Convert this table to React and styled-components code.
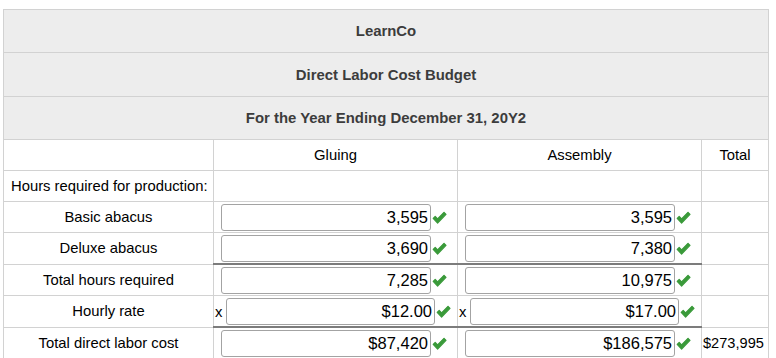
import React from "react";
import styled, { createGlobalStyle } from "styled-components";

const Global = createGlobalStyle`
  html, body { margin: 0; padding: 0; background: #fff; }
  body { font-family: "Liberation Sans", Arial, sans-serif; }
`;

const Page = styled.div`
  padding: 9px 0 0 3px;
`;

const Table = styled.table`
  border-collapse: collapse;
  table-layout: fixed;
  width: 765px;
`;

const HeadCell = styled.td`
  background: #ededed;
  border: 1px solid #d2d2d2;
  height: ${(p) => p.$h || 42}px;
  padding: 0;
  text-align: center;
  vertical-align: middle;
  font-weight: bold;
  font-size: 14.9px;
  color: #3c3c3c;
`;

const ColHead = styled.td`
  border: 1px solid #d2d2d2;
  height: 30px;
  padding: 0;
  text-align: center;
  vertical-align: middle;
  font-size: 14.8px;
  color: #000;
`;

const Label = styled.td`
  border: 1px solid #d2d2d2;
  height: 30px;
  padding: ${(p) => (p.$left ? "0 0 0 7px" : "0")};
  text-align: ${(p) => (p.$left ? "left" : "center")};
  vertical-align: middle;
  font-size: 14.8px;
  color: #000;
  white-space: nowrap;
`;

const ValueCell = styled.td`
  border: 1px solid #d2d2d2;
  border-top: ${(p) => (p.$thick ? "2px solid #7c7c7c" : "1px solid #d2d2d2")};
  height: 30px;
  padding: 0;
  vertical-align: middle;
`;

const TotalCell = styled.td`
  border: 1px solid #d2d2d2;
  height: 30px;
  padding: 0 0 0 1px;
  vertical-align: middle;
  font-size: 14.6px;
  color: #000;
  white-space: nowrap;
`;

const Field = styled.div`
  display: flex;
  align-items: center;
  padding-left: ${(p) => (p.$x ? "1px" : "7px")};
  padding-top: 1px;
`;

const Times = styled.span`
  font-size: 14.8px;
  color: #000;
  width: 11px;
`;

const Box = styled.div`
  box-sizing: border-box;
  width: ${(p) => (p.$x ? "209px" : "210px")};
  height: 27px;
  border: 1px solid #a3a3a3;
  border-radius: 3px;
  background: #fff;
  display: flex;
  align-items: center;
  justify-content: flex-end;
  padding-right: 2px;
  font-size: 16.5px;
  color: #000;
`;

const Check = styled.svg`
  width: 15px;
  height: 14px;
  margin-left: 1px;
  flex: none;
`;

const CheckMark = () => (
  <Check viewBox="0 0 15 14">
    <path
      d="M1.2 7.4 L3.2 5.4 L5.6 7.8 L12 1.3 L14 3.3 L5.6 12 Z"
      fill="#3a9a3a"
      stroke="#3a9a3a"
      strokeWidth="1.2"
      strokeLinejoin="round"
    />
  </Check>
);

const Input = ({ value, x }) => (
  <Field $x={x}>
    {x && <Times>x</Times>}
    <Box $x={x}>{value}</Box>
    <CheckMark />
  </Field>
);

const rows = [
  { label: "Basic abacus", g: "3,595", a: "3,595" },
  { label: "Deluxe abacus", g: "3,690", a: "7,380" },
  { label: "Total hours required", g: "7,285", a: "10,975", thick: true },
  { label: "Hourly rate", g: "$12.00", a: "$17.00", x: true },
  { label: "Total direct labor cost", g: "$87,420", a: "$186,575", thick: true, total: "$273,995" },
];

export default function App() {
  return (
    <Page>
      <Global />
      <Table>
        <colgroup>
          <col style={{ width: 210 }} />
          <col style={{ width: 244 }} />
          <col style={{ width: 244 }} />
          <col style={{ width: 67 }} />
        </colgroup>
        <tbody>
          <tr><HeadCell colSpan={4}>LearnCo</HeadCell></tr>
          <tr><HeadCell colSpan={4} $h={43}>Direct Labor Cost Budget</HeadCell></tr>
          <tr><HeadCell colSpan={4}>For the Year Ending December 31, 20Y2</HeadCell></tr>
          <tr>
            <ColHead />
            <ColHead>Gluing</ColHead>
            <ColHead>Assembly</ColHead>
            <ColHead>Total</ColHead>
          </tr>
          <tr>
            <Label $left>Hours required for production:</Label>
            <ValueCell />
            <ValueCell />
            <TotalCell />
          </tr>
          {rows.map((r) => (
            <tr key={r.label}>
              <Label>{r.label}</Label>
              <ValueCell $thick={r.thick}><Input value={r.g} x={r.x} /></ValueCell>
              <ValueCell $thick={r.thick}><Input value={r.a} x={r.x} /></ValueCell>
              <TotalCell>{r.total || ""}</TotalCell>
            </tr>
          ))}
        </tbody>
      </Table>
    </Page>
  );
}
